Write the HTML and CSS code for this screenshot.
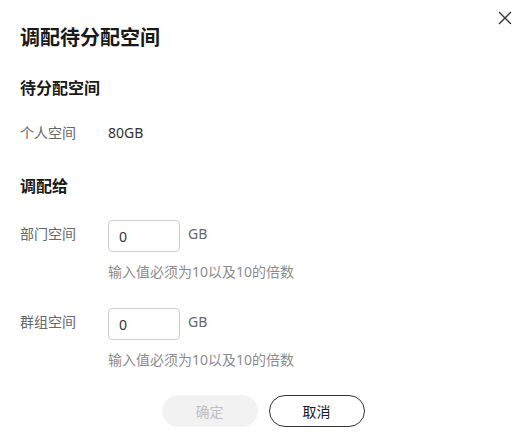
FILE: index.html
```html
<!DOCTYPE html>
<html lang="zh-CN">
<head>
    <meta charset="UTF-8">
    <meta name="viewport" content="width=device-width, initial-scale=1.0">
    <title>调配待分配空间</title>
    <link rel="stylesheet" href="styles.css">
</head>
<body>
    <div class="dialog">
        <button class="close-btn" aria-label="关闭">
            <svg width="14" height="14" viewBox="0 0 14 14">
                <path d="M1 1 L13 13 M13 1 L1 13" stroke="#333" stroke-width="1.3" fill="none"/>
            </svg>
        </button>

        <h2 class="dialog-title">调配待分配空间</h2>

        <h3 class="section-title">待分配空间</h3>
        <div class="info-row">
            <span class="label">个人空间</span>
            <span class="value">80GB</span>
        </div>

        <h3 class="section-title section-gap">调配给</h3>

        <div class="field">
            <span class="label">部门空间</span>
            <div class="field-body">
                <div class="input-line">
                    <input type="text" class="size-input" value="0">
                    <span class="unit">GB</span>
                </div>
                <p class="hint">输入值必须为10以及10的倍数</p>
            </div>
        </div>

        <div class="field field-next">
            <span class="label">群组空间</span>
            <div class="field-body">
                <div class="input-line">
                    <input type="text" class="size-input" value="0">
                    <span class="unit">GB</span>
                </div>
                <p class="hint">输入值必须为10以及10的倍数</p>
            </div>
        </div>

        <div class="actions">
            <button class="btn btn-ok" disabled>确定</button>
            <button class="btn btn-cancel">取消</button>
        </div>
    </div>
</body>
</html>
```

FILE: styles.css
```css
:root {
--text: #191919;
--label: #666666;
--hint: #8c8c8c;
--line: #cccccc;
}

*,
*::before,
*::after {
box-sizing: border-box;
}

body {
margin: 0;
background-color: #ffffff;
font-family: "Noto Sans", "Noto Sans CJK SC", sans-serif;
color: var(--text);
}

.dialog {
position: relative;
width: 526px;
height: 438px;
padding: 24px 20px;
}

.close-btn {
position: absolute;
top: 11px;
right: 14px;
width: 14px;
height: 14px;
padding: 0;
border: none;
background: transparent;
display: flex;
cursor: pointer;
}

.dialog-title {
margin: 0;
font-size: 20px;
line-height: 28px;
font-weight: 700;
}

.section-title {
margin: 24px 0 0;
font-size: 16px;
line-height: 24px;
font-weight: 700;
}

.section-gap {
margin-top: 30px;
}

.info-row {
display: flex;
margin-top: 22px;
font-size: 14px;
line-height: 22px;
}

.label {
width: 88px;
flex-shrink: 0;
color: var(--label);
font-size: 14px;
}

.value {
color: #333333;
}

.field {
display: flex;
align-items: flex-start;
margin-top: 22px;
}

.field .label {
line-height: 28px;
}

.field-next {
margin-top: 26px;
}

.input-line {
display: flex;
align-items: flex-start;
}

.size-input {
width: 72px;
height: 32px;
padding: 0 10px;
border: 1px solid var(--line);
border-radius: 4px;
font-family: inherit;
font-size: 14px;
color: #333333;
outline: none;
}

.unit {
margin-left: 8px;
font-size: 14px;
line-height: 28px;
color: var(--label);
}

.hint {
margin: 10px 0 0;
font-size: 14px;
line-height: 20px;
color: var(--hint);
}

.actions {
display: flex;
justify-content: center;
gap: 11px;
margin-top: 25px;
}

.btn {
width: 96px;
height: 32px;
border-radius: 16px;
font-family: inherit;
font-size: 14px;
cursor: pointer;
}

.btn-ok {
background-color: #f2f2f2;
border: 1px solid #f2f2f2;
color: #bfbfbf;
cursor: default;
}

.btn-cancel {
background-color: #ffffff;
border: 1px solid #333333;
color: var(--text);
}
```
